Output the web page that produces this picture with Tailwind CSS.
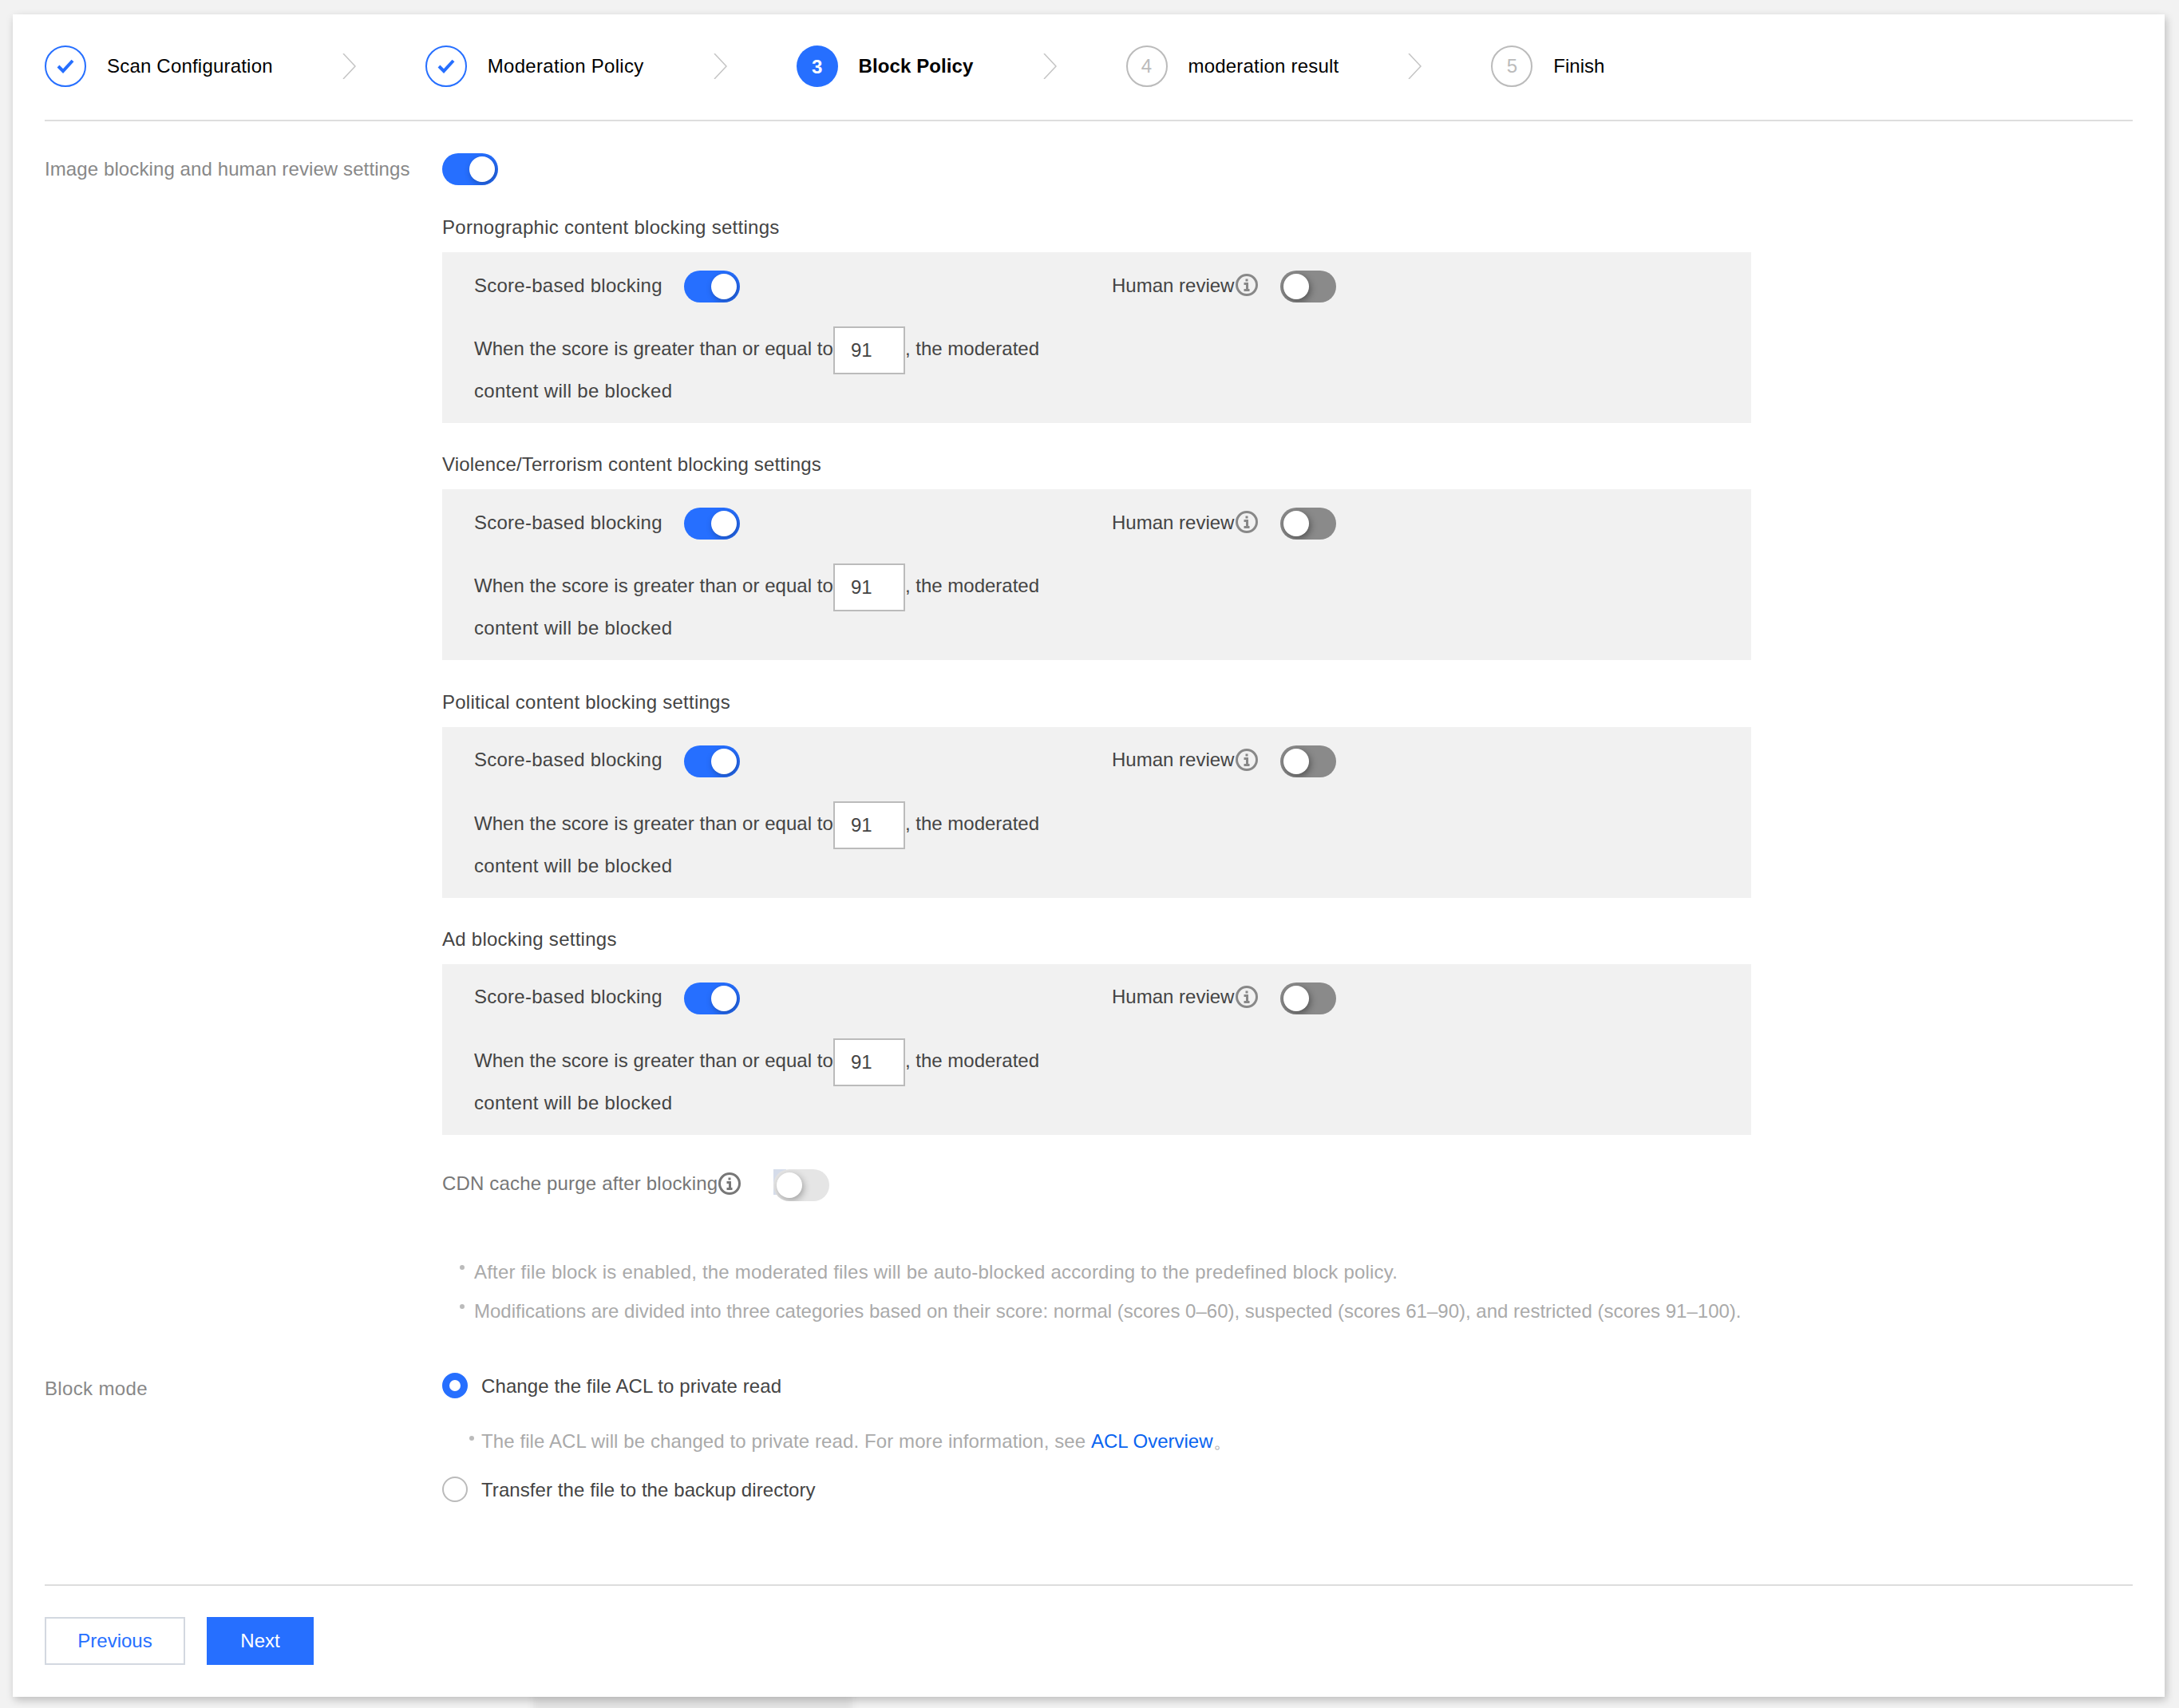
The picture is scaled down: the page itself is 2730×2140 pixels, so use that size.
<!DOCTYPE html>
<html lang="en">
<head>
    <meta charset="UTF-8">
    <title>Block Policy</title>
    <script src="https://cdn.jsdelivr.net/npm/@tailwindcss/browser@4"></script>
</head>
<body class="relative overflow-hidden bg-[#f2f2f2] font-['Liberation_Sans',Arial,sans-serif] text-[24px] text-[#444]">
<!-- darker patch under the card -->
<div class="absolute left-[668px] top-[2120px] w-[400px] h-[30px] bg-[#e4e4e4] blur-[4px]"></div>
<div class="relative pt-[18px] pl-[16px] w-[2730px] h-[2140px]">
    <div class="relative w-[2696px] h-[2108px] bg-white px-[40px] shadow-[2px_4px_10px_rgba(0,0,0,0.22)]">

        <!-- Steps -->
        <div class="flex items-center gap-[87px] h-[134px] pb-[2px] border-b-2 border-[#ddd] text-black">
            <div class="flex items-center gap-[26px]">
                <span class="flex items-center justify-center w-[52px] h-[52px] rounded-full border-2 border-[#266fff]">
                    <svg width="24" height="20" viewBox="0 0 24 20" fill="none" stroke="#266fff" stroke-width="4"><path d="M3 10l6 6L21 3"/></svg>
                </span>
                <span class="tracking-[0.2px]">Scan Configuration</span>
            </div>
            <svg width="17" height="32" viewBox="0 0 17 32" fill="none" stroke="#c4c4c4" stroke-width="1.5"><path d="M1 0l15 16L1 32"/></svg>
            <div class="flex items-center gap-[26px]">
                <span class="flex items-center justify-center w-[52px] h-[52px] rounded-full border-2 border-[#266fff]">
                    <svg width="24" height="20" viewBox="0 0 24 20" fill="none" stroke="#266fff" stroke-width="4"><path d="M3 10l6 6L21 3"/></svg>
                </span>
                <span class="tracking-[0.3px]">Moderation Policy</span>
            </div>
            <svg width="17" height="32" viewBox="0 0 17 32" fill="none" stroke="#c4c4c4" stroke-width="1.5"><path d="M1 0l15 16L1 32"/></svg>
            <div class="flex items-center gap-[26px]">
                <span class="flex items-center justify-center w-[52px] h-[52px] pt-[2px] rounded-full bg-[#266fff] text-white font-bold">3</span>
                <span class="font-bold tracking-[0.1px]">Block Policy</span>
            </div>
            <svg width="17" height="32" viewBox="0 0 17 32" fill="none" stroke="#c4c4c4" stroke-width="1.5"><path d="M1 0l15 16L1 32"/></svg>
            <div class="flex items-center gap-[26px]">
                <span class="flex items-center justify-center w-[52px] h-[52px] rounded-full border-2 border-[#bbb] text-[#bbb]">4</span>
                <span class="tracking-[0.2px]">moderation result</span>
            </div>
            <svg width="17" height="32" viewBox="0 0 17 32" fill="none" stroke="#c4c4c4" stroke-width="1.5"><path d="M1 0l15 16L1 32"/></svg>
            <div class="flex items-center gap-[26px]">
                <span class="flex items-center justify-center w-[52px] h-[52px] rounded-full border-2 border-[#bbb] text-[#bbb]">5</span>
                <span>Finish</span>
            </div>
        </div>

        <!-- Form -->
        <div class="flex mt-[40px]">
            <div class="w-[498px] shrink-0 text-[#888] leading-[40px] tracking-[0.1px]">Image blocking and human review settings</div>
            <div class="w-[1640px]">
                <div class="flex items-center w-[70px] h-[40px] rounded-full overflow-hidden bg-[#266fff] pl-[34px]">
                    <span class="w-[32px] h-[32px] rounded-full bg-white shadow-[2px_3px_8px_rgba(0,0,0,0.3)]"></span>
                </div>

                <div id="sections"></div>

                <div class="flex items-center mt-[43px] h-[40px]">
                    <span class="pb-[3px] text-[#777] tracking-[0.17px]">CDN cache purge after blocking</span>
                    <svg class="ml-[1px] mb-[4px]" width="28" height="28" viewBox="0 0 28 28" fill="none" stroke="#777" stroke-width="3"><circle cx="14" cy="14" r="12.5"/><path d="M14 6.5v3M10.5 12.5h4v8M10.5 20.5h7"/></svg>
                    <div class="relative w-[70px] h-[40px] ml-[41px]">
                        <span class="absolute left-0 top-0 w-[16px] h-[32px] bg-[#d5dcea]"></span>
                        <div class="relative flex items-center w-[70px] h-[40px] rounded-full overflow-hidden bg-[#e5e5e5] pl-[4px]">
                            <span class="w-[32px] h-[32px] rounded-full bg-white shadow-[2px_3px_8px_rgba(0,0,0,0.3)]"></span>
                        </div>
                    </div>
                </div>

                <ul class="mt-[64px] text-[#aaa] leading-[49px]">
                    <li class="relative pl-[40px] tracking-[0.2px]"><span class="absolute left-[22px] top-[16px] w-[6px] h-[6px] rounded-full bg-[#bbb]"></span>After file block is enabled, the moderated files will be auto-blocked according to the predefined block policy.</li>
                    <li class="relative pl-[40px]"><span class="absolute left-[22px] top-[16px] w-[6px] h-[6px] rounded-full bg-[#bbb]"></span>Modifications are divided into three categories based on their score: normal (scores 0–60), suspected (scores 61–90), and restricted (scores 91–100).</li>
                </ul>
            </div>
        </div>

        <div class="flex mt-[53px]">
            <div class="w-[498px] shrink-0 text-[#888] leading-[40px] tracking-[0.35px]">Block mode</div>
            <div>
                <div class="flex items-center gap-[17px] h-[32px]">
                    <span class="w-[32px] h-[32px] rounded-full border-[9px] border-[#266fff] bg-white"></span>
                    <span class="pt-[3px] tracking-[0.1px]">Change the file ACL to private read</span>
                </div>
                <p class="relative mt-[34px] pl-[49px] text-[#aaa] leading-[40px] tracking-[0.1px]"><span class="absolute left-[34px] top-[13px] w-[6px] h-[6px] rounded-full bg-[#bbb]"></span>The file ACL will be changed to private read. For more information, see <a href="#" class="text-[#0a64f0] tracking-normal">ACL Overview</a>。</p>
                <div class="flex items-center gap-[17px] h-[32px] mt-[24px]">
                    <span class="w-[32px] h-[32px] rounded-full border-2 border-[#bbb] bg-white"></span>
                    <span class="pt-[3px] tracking-[0.08px]">Transfer the file to the backup directory</span>
                </div>
            </div>
        </div>

        <!-- Footer -->
        <div class="absolute left-[40px] right-[40px] top-[1967px] border-t-2 border-[#ddd] pt-[39px] flex gap-[27px]">
            <button class="w-[176px] h-[60px] border-2 border-[#d3d8e0] bg-white text-[#266fff]">Previous</button>
            <button class="w-[134px] h-[60px] bg-[#266fff] text-white">Next</button>
        </div>
    </div>
</div>

<script>
    // the four blocks only differ in their title
    const sections = [
        { title: "Pornographic content blocking settings", track: "tracking-[0.27px]", top: "mt-[33px]" },
        { title: "Violence/Terrorism content blocking settings", track: "tracking-[0.16px]", top: "mt-[32.33px]" },
        { title: "Political content blocking settings", track: "tracking-[0.25px]", top: "mt-[32.33px]" },
        { title: "Ad blocking settings", track: "tracking-[0.26px]", top: "mt-[32.33px]" }
    ];
    document.getElementById('sections').innerHTML = sections.map(s => `
        <h3 class="font-normal leading-[40px] ${s.top} ${s.track}">${s.title}</h3>
        <div class="mt-[11px] h-[214px] bg-[#f1f1f1] pl-[40px] pt-[23px]">
            <div class="flex items-center h-[40px]">
                <div class="flex items-center w-[799px]">
                    <span class="pb-[3px] tracking-[0.25px]">Score-based blocking</span>
                    <div class="flex items-center w-[70px] h-[40px] ml-[27px] rounded-full overflow-hidden bg-[#266fff] pl-[34px]">
                        <span class="w-[32px] h-[32px] rounded-full bg-white shadow-[2px_3px_8px_rgba(0,0,0,0.3)]"></span>
                    </div>
                </div>
                <span class="pb-[3px]">Human review</span>
                <svg class="ml-[2px] mb-[4px]" width="28" height="28" viewBox="0 0 28 28" fill="none" stroke="#888" stroke-width="3"><circle cx="14" cy="14" r="12.5"/><path d="M14 6.5v3M10.5 12.5h4v8M10.5 20.5h7"/></svg>
                <div class="flex items-center w-[70px] h-[40px] ml-[28px] rounded-full overflow-hidden bg-[#8a8a8a] pl-[4px]">
                    <span class="w-[32px] h-[32px] rounded-full bg-white shadow-[2px_3px_8px_rgba(0,0,0,0.4)]"></span>
                </div>
            </div>
            <div class="flex items-center h-[60px] mt-[30px]">
                <span class="pb-[4px] tracking-[0.04px]">When the score is greater than or equal to</span>
                <span class="flex items-center w-[90px] h-[60px] pl-[20px] border-2 border-[#bbb] bg-white">91</span>
                <span class="pb-[4px]">, the moderated</span>
            </div>
            <p class="leading-[42px] tracking-[0.3px]">content will be blocked</p>
        </div>
    `).join('');
</script>
</body>
</html>
